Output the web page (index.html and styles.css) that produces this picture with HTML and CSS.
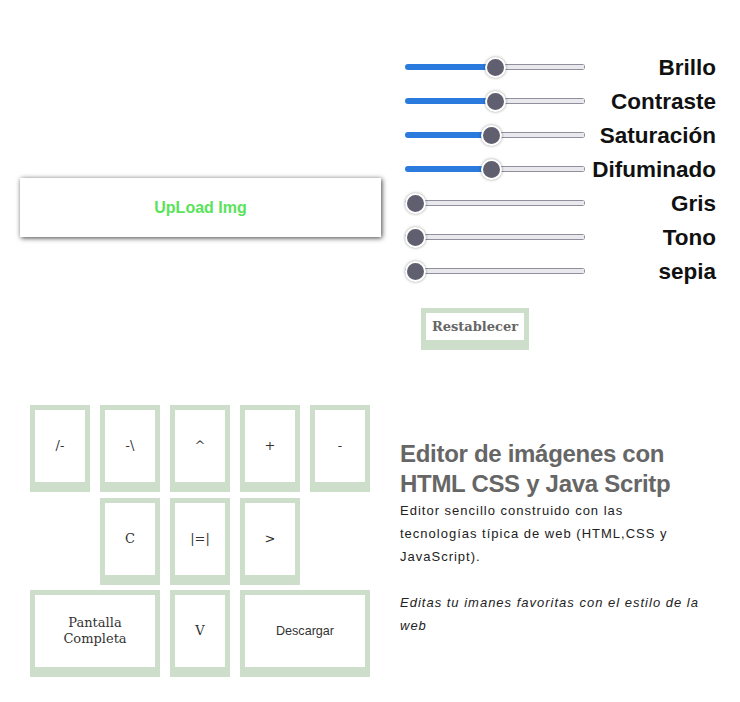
FILE: index.html
```html
<!DOCTYPE html>
<html lang="es">
<head>
<meta charset="utf-8">
<title>Editor de imágenes</title>
<link rel="stylesheet" href="styles.css">
</head>
<body>
<div class="top">
  <div class="upload-wrap">
    <button class="upload">UpLoad Img</button>
  </div>
  <div class="controls">
    <div class="row"><input type="range" min="0" max="200" value="100" style="--p:.5"><span class="label">Brillo</span></div>
    <div class="row"><input type="range" min="0" max="200" value="100" style="--p:.5"><span class="label">Contraste</span></div>
    <div class="row"><input type="range" min="0" max="200" value="95" style="--p:.475"><span class="label">Saturación</span></div>
    <div class="row"><input type="range" min="0" max="200" value="96" style="--p:.48"><span class="label">Difuminado</span></div>
    <div class="row"><input type="range" min="0" max="100" value="0" style="--p:0"><span class="label">Gris</span></div>
    <div class="row"><input type="range" min="0" max="360" value="0" style="--p:0"><span class="label">Tono</span></div>
    <div class="row"><input type="range" min="0" max="100" value="0" style="--p:0"><span class="label">sepia</span></div>
    <button class="reset">Restablecer</button>
  </div>
</div>
<div class="bottom">
  <div class="pad">
    <button class="key">/-</button>
    <button class="key">-\</button>
    <button class="key">^</button>
    <button class="key">+</button>
    <button class="key">-</button>
    <button class="key c2">C</button>
    <button class="key">|=|</button>
    <button class="key">&gt;</button>
    <button class="key c1 span2">Pantalla Completa</button>
    <button class="key">V</button>
    <button class="key span2 sans">Descargar</button>
  </div>
  <div class="desc">
    <h1 class="title">Editor de imágenes con HTML CSS y Java Scritp</h1>
    <p class="text">Editor sencillo construido con las tecnologías típica de web (HTML,CSS y JavaScript).</p>
    <p class="text italic">Editas tu imanes favoritas con el estilo de la web</p>
  </div>
</div>
</body>
</html>
```
FILE: styles.css
```css
html, body {
  margin: 0;
  padding: 0;
  background: #fff;
}
body {
  width: 740px;
  font-family: "Liberation Sans", Arial, sans-serif;
}
.top {
  display: flex;
  padding-top: 50px;
}
.upload-wrap {
  width: 405px;
  box-sizing: border-box;
  padding-left: 20px;
  padding-top: 128px;
}
.upload {
  display: block;
  width: 361px;
  height: 59px;
  border: none;
  background: #fff;
  box-shadow: 1px 1px 5px rgba(0, 0, 0, 0.75);
  font-family: "Liberation Sans", Arial, sans-serif;
  font-weight: bold;
  font-size: 16px;
  color: #58e35a;
  padding: 0;
}
.controls {
  width: 311px;
}
.row {
  display: flex;
  align-items: center;
  height: 34px;
}
.label {
  flex: 1;
  text-align: right;
  font-weight: bold;
  font-size: 22.5px;
  line-height: 26px;
  padding-top: 2px;
  color: #111;
}
input[type="range"] {
  -webkit-appearance: none;
  appearance: none;
  width: 180px;
  height: 20px;
  margin: 0;
  padding: 0;
  background: transparent;
  --f: calc(10px + var(--p) * 160px);
}
input[type="range"]::-webkit-slider-runnable-track {
  height: 6px;
  border: none;
  border-radius: 3px;
  background:
    linear-gradient(to right, #2b7ade var(--f), transparent var(--f)),
    linear-gradient(#e9e9ed, #e9e9ed) 1px 1px / calc(100% - 2px) calc(100% - 2px) no-repeat,
    #8f8f9d;
}
input[type="range"]::-webkit-slider-thumb {
  -webkit-appearance: none;
  box-sizing: border-box;
  width: 21px;
  height: 21px;
  margin-top: -7.5px;
  border-radius: 50%;
  background: #5f5f6f;
  border: 2px solid #fff;
  box-shadow: 0 0 3px rgba(0, 0, 0, 0.4);
}
.reset {
  display: block;
  box-sizing: border-box;
  width: 108px;
  height: 42px;
  margin: 20px 0 0 16px;
  padding: 0;
  background: #fff;
  border: 5px solid #cddfcb;
  border-bottom-width: 10px;
  font-family: "DejaVu Serif", serif;
  font-weight: bold;
  font-size: 13px;
  color: #666;
}
.bottom {
  display: flex;
  align-items: flex-start;
  margin-top: 55px;
}
.pad {
  display: grid;
  grid-template-columns: repeat(5, 60px);
  grid-auto-rows: 87px;
  column-gap: 10px;
  row-gap: 5.5px;
  margin-left: 30px;
}
.key {
  box-sizing: border-box;
  margin: 0;
  padding: 0;
  background: #fff;
  border: 5px solid #cddfcb;
  border-bottom-width: 10px;
  font-family: "DejaVu Serif", serif;
  font-size: 13px;
  line-height: 16px;
  color: #333;
}
.c2 { grid-column-start: 2; }
.c1 { grid-column-start: 1; }
.span2 { grid-column-end: span 2; }
.sans {
  font-family: "Liberation Sans", Arial, sans-serif;
  font-size: 12.6px;
}
.desc {
  width: 300px;
  margin-left: 30px;
  margin-top: 34px;
}
.title {
  margin: 0;
  font-size: 24px;
  line-height: 30px;
  letter-spacing: -0.3px;
  font-weight: bold;
  color: #666;
}
.text {
  margin: 0;
  font-size: 13px;
  line-height: 23px;
  letter-spacing: 1px;
  color: #222;
}
.italic {
  font-style: italic;
  margin-top: 23px;
}
```
